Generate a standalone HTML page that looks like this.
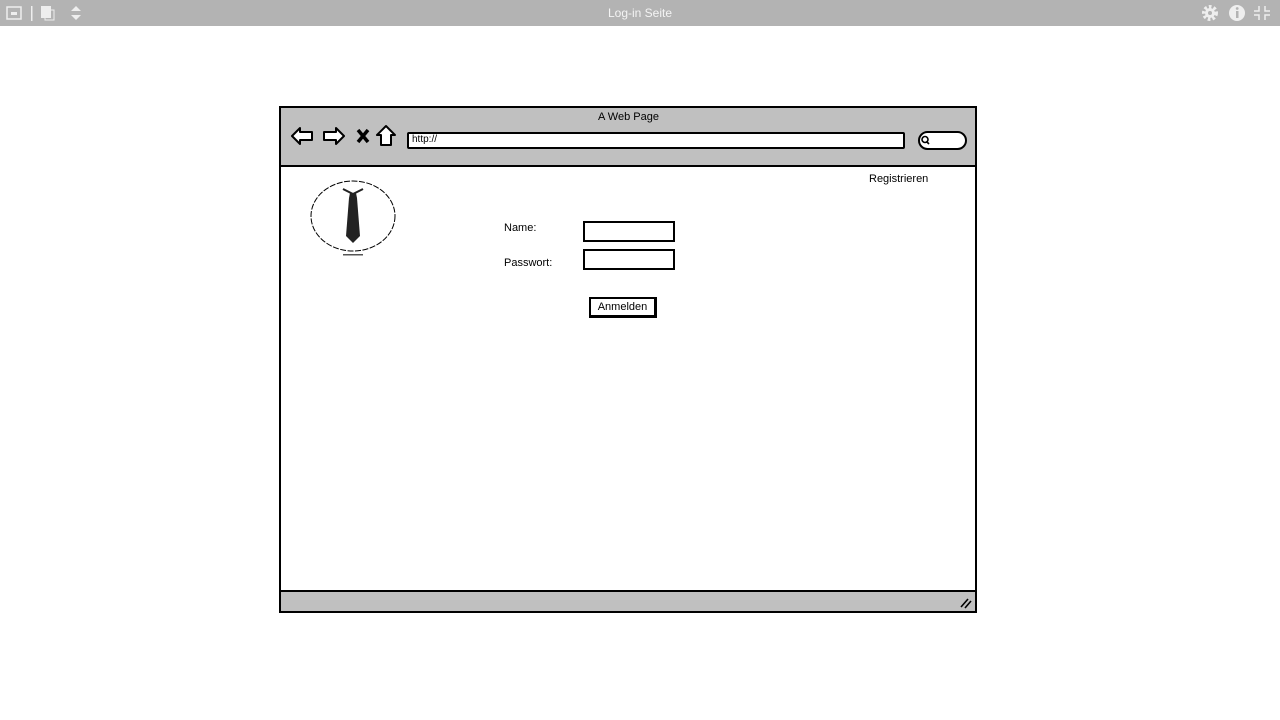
<!DOCTYPE html>
<html><head><meta charset="utf-8"><style>
*{margin:0;padding:0;box-sizing:border-box}
body{width:1280px;height:720px;background:#fff;position:relative;overflow:hidden;font-family:"Liberation Sans",sans-serif;color:#000}
.top{position:absolute;left:0;top:0;width:1280px;height:26px;background:#b3b3b3}
.top .t{position:absolute;left:0;width:1280px;text-align:center;top:6px;color:#f4f4f4;font-size:12px}
.a{position:absolute}
.txt{font-size:11px}
</style></head><body>
<div class="top"><div class="t">Log-in Seite</div>
<svg class="a" style="left:0;top:0" width="90" height="26">
<rect x="7" y="7" width="14" height="12" fill="none" stroke="#eee" stroke-width="1.5"/><rect x="11" y="12" width="6" height="3" fill="#eee"/>
<rect x="31" y="6" width="1.5" height="15" fill="#eee"/>
<rect x="41" y="6" width="10" height="12" fill="#eee"/><rect x="45" y="10" width="9" height="10" fill="none" stroke="#eee" stroke-width="1"/>
<path d="M71 11 L76 6 L81 11Z M71 15 L76 20 L81 15Z" fill="#eee"/>
</svg>
<svg class="a" style="left:1195;top:0" width="85" height="26">
<circle cx="15" cy="13" r="6" fill="none" stroke="#eee" stroke-width="4" stroke-dasharray="2.5 2"/><circle cx="15" cy="13" r="5" fill="#eee"/><circle cx="15" cy="13" r="2" fill="#b3b3b3"/>
<circle cx="42" cy="13" r="8" fill="#eee"/><rect x="41" y="11" width="2.5" height="7" fill="#b3b3b3"/><circle cx="42.2" cy="8.5" r="1.4" fill="#b3b3b3"/>
<path d="M64 6v5h-5M70 6v5h5M64 20v-5h-5M70 20v-5h5" fill="none" stroke="#eee" stroke-width="1.5"/>
</svg>
</div>
<div class="a" style="left:279px;top:106px;width:698px;height:507px;border:2px solid #000;background:#fff"></div>
<div class="a" style="left:281px;top:108px;width:694px;height:59px;background:#c0c0c0;border-bottom:2px solid #000"></div>
<div class="a" style="left:281px;top:590px;width:694px;height:21px;background:#c0c0c0;border-top:2px solid #000"></div>
<div class="a txt" style="left:598px;top:111px">A Web Page</div>
<svg class="a" style="left:288px;top:122px" width="110" height="28">
<path d="M4 14 L12 6 L12 10 L24 10 L24 18 L12 18 L12 22Z" fill="#fff" stroke="#000" stroke-width="2" stroke-linejoin="round"/>
<path d="M56 14 L48 6 L48 10 L36 10 L36 18 L48 18 L48 22Z" fill="#fff" stroke="#000" stroke-width="2" stroke-linejoin="round"/>
<path d="M70 8 L80 20 M80 8 L70 20" stroke="#000" stroke-width="3.5"/>
<path d="M98 4 L89 13 L93 13 L93 23 L103 23 L103 13 L107 13Z" fill="#fff" stroke="#000" stroke-width="2" stroke-linejoin="round"/>
</svg>
<div class="a" style="left:407px;top:132px;width:498px;height:17px;background:#fff;border:2px solid #000;border-radius:2px"></div>
<div class="a" style="left:412px;top:134px;font-size:10px">http://</div>
<div class="a" style="left:918px;top:131px;width:49px;height:19px;background:#fff;border:2px solid #000;border-radius:10px"></div>
<svg class="a" style="left:920px;top:134px" width="12" height="12"><circle cx="5" cy="5.5" r="3" fill="none" stroke="#000" stroke-width="1.6"/><path d="M7 8 L9 10" stroke="#000" stroke-width="1.6"/></svg>
<div class="a txt" style="left:869px;top:173px">Registrieren</div>
<svg class="a" style="left:305px;top:178px" width="100" height="85">
<ellipse cx="48" cy="38" rx="42" ry="35" fill="none" stroke="#000" stroke-width="1" stroke-dasharray="6 1.5"/>
<path d="M38 11 L48 16 L58 11" fill="none" stroke="#222" stroke-width="2"/>
<path d="M45 15 L51 15 L52 20 L55 58 L48 65 L41 58 L44 20Z" fill="#222"/>
<rect x="38" y="76" width="20" height="1.5" fill="#555"/>
</svg>
<div class="a txt" style="left:504px;top:222px">Name:</div>
<div class="a txt" style="left:504px;top:257px">Passwort:</div>
<div class="a" style="left:583px;top:221px;width:92px;height:21px;border:2px solid #000;background:#fff"></div>
<div class="a" style="left:583px;top:249px;width:92px;height:21px;border:2px solid #000;background:#fff"></div>
<div class="a" style="left:589px;top:297px;width:68px;height:21px;border:2px solid #000;border-right-width:3px;border-bottom-width:3px;background:#fff;font-size:11px;text-align:center;line-height:17px">Anmelden</div>
<svg class="a" style="left:958px;top:596px" width="16" height="14"><path d="M3 11 L10 3 M7 12 L13 5" stroke="#000" stroke-width="1.6"/></svg>
</body></html>
